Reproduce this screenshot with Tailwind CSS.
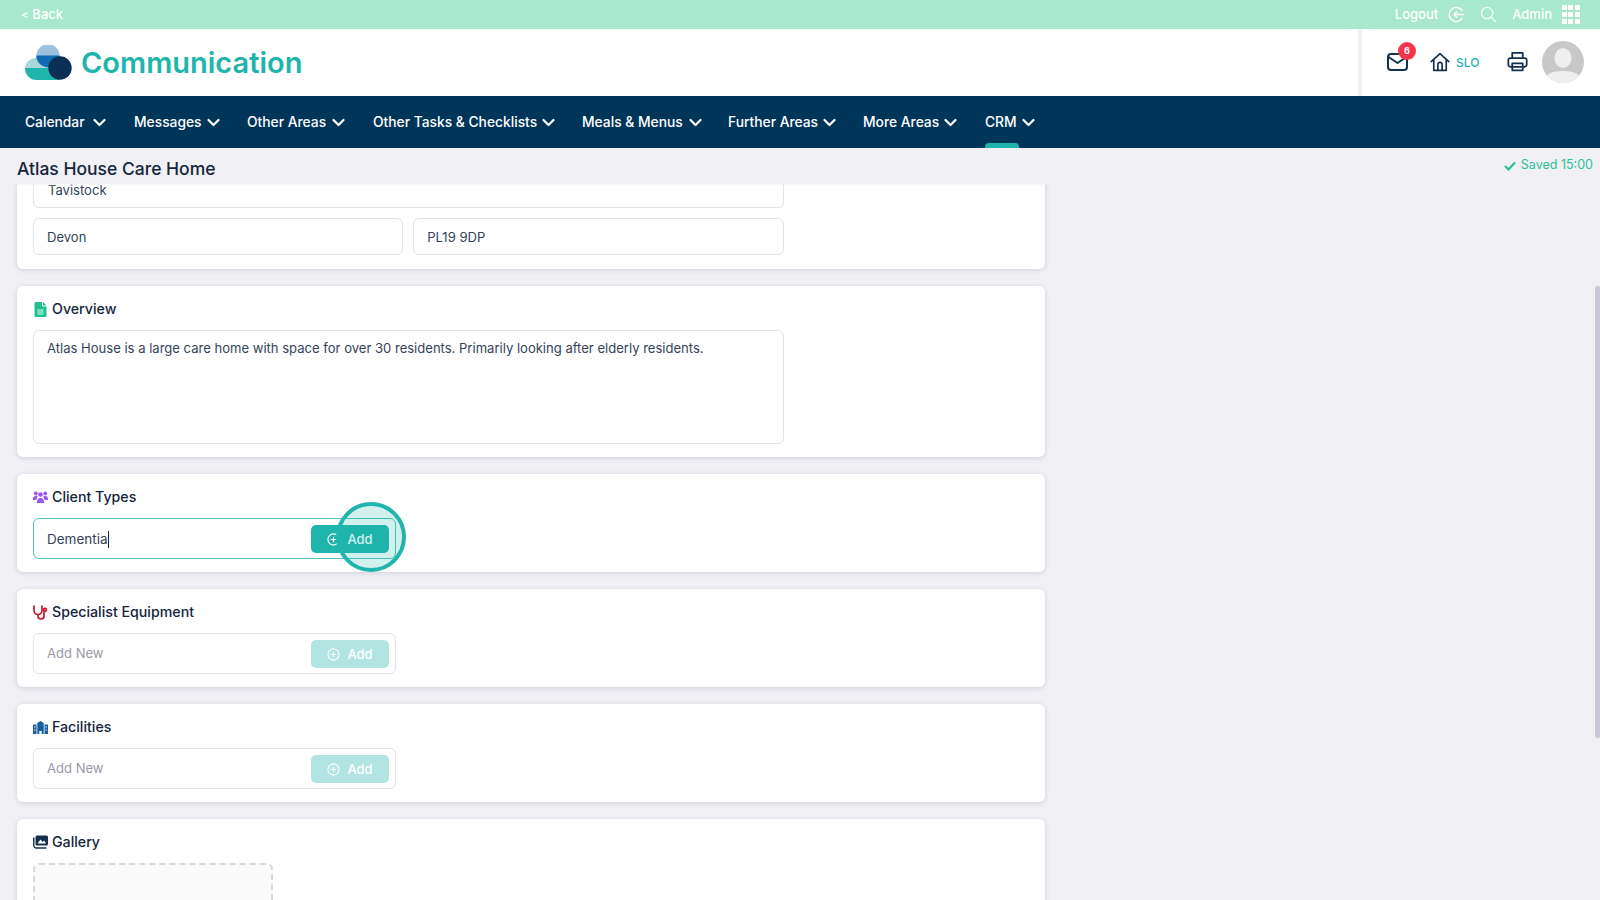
<!DOCTYPE html>
<html lang="en">

<head>
    <meta charset="UTF-8">
    <meta name="viewport" content="width=device-width, initial-scale=1.0">
    <title>Communication</title>
    <script src="https://cdn.jsdelivr.net/npm/@tailwindcss/browser@4"></script>
</head>

<body class="bg-[#f0f0f5] h-[900px] overflow-hidden font-['Inter',sans-serif] text-[#14263d] relative">
    <!-- Top bar -->
    <div class="h-[29px] bg-[#a7e8cf] flex items-center justify-between text-white text-[13px] font-medium pl-[21px] pr-[21px]">
        <a class="flex items-center gap-[4px]"><span class="text-[11px]">&lt;</span>Back</a>
        <div class="flex items-center">
            <span class="mr-[10px]">Logout</span>
            <svg class="w-[17px] h-[17px] mr-[15px]" viewBox="0 0 24 24" fill="none" stroke="currentColor" stroke-width="2" stroke-linecap="round" stroke-linejoin="round"><path d="M20 6.5A10 10 0 1 0 20 17.5"/><path d="M22 12H9"/><path d="M12.5 8 8.5 12l4 4"/></svg>
            <svg class="w-[17px] h-[17px] mr-[15px]" viewBox="0 0 24 24" fill="none" stroke="currentColor" stroke-width="1.7" stroke-linecap="round"><circle cx="10" cy="10" r="8"/><path d="m16 16 6.5 6.5"/></svg>
            <span class="mr-[10px]">Admin</span>
            <div class="grid grid-cols-3 gap-[2px] w-[17px]">
                <i class="w-[5px] h-[5px] bg-white"></i><i class="w-[5px] h-[5px] bg-white"></i><i class="w-[5px] h-[5px] bg-white"></i>
                <i class="w-[5px] h-[5px] bg-white"></i><i class="w-[5px] h-[5px] bg-white"></i><i class="w-[5px] h-[5px] bg-white"></i>
                <i class="w-[5px] h-[5px] bg-white"></i><i class="w-[5px] h-[5px] bg-white"></i><i class="w-[5px] h-[5px] bg-white"></i>
            </div>
        </div>
    </div>

    <!-- Logo row -->
    <header class="h-[67px] bg-white flex items-center justify-between">
        <div class="flex items-center pl-[25px]">
            <svg class="w-[47px] h-[36px] mr-[9px]" viewBox="0 0 47 36">
                <path d="M0 23.500A10.500 10.500 0 0 1 10.500 13H30V24H0Z" fill="#a8d8d8"/>
                <path d="M0 23H34V35H11.500A11.500 11.500 0 0 1 0 23Z" fill="#1fb5ac"/>
                <circle cx="23" cy="11" r="11.700" fill="#9fc0dd"/>
                <path d="M11.300 10.500A11.700 11.700 0 1 0 34.700 10.500Z" fill="#0f6cb0"/>
                <circle cx="35" cy="23" r="11.700" fill="#0b2f55"/>
            </svg>
            <span class="text-[29px] font-semibold text-[#1fb5ac]">Communication</span>
        </div>
        <div class="h-full w-[242px] border-l-[4px] border-[#f0f0f5] relative">
            <svg class="absolute left-[25px] top-[24px] w-[21px] h-[18px]" viewBox="0 0 21 18" fill="none" stroke="#14304f" stroke-width="2" stroke-linejoin="round"><rect x="1" y="1" width="19" height="16" rx="3"/><path d="m1.500 4 9 6 9-6"/></svg>
            <span class="absolute left-[36px] top-[13px] w-[18px] h-[18px] rounded-full bg-[#f5334a] text-white text-[9px] font-bold flex items-center justify-center">6</span>
            <svg class="absolute left-[68px] top-[23px] w-[20px] h-[20px]" viewBox="0 0 24 24" fill="none" stroke="#14304f" stroke-width="2" stroke-linecap="round" stroke-linejoin="round"><path d="M1.500 11.500 12 2l10.500 9.500"/><path d="M4.500 9v13h15V9"/><path d="M9.500 22v-7a2.500 2.500 0 0 1 5 0v7"/></svg>
            <span class="absolute left-[94px] top-[25px] text-[12px] font-medium text-[#1fb5ac]">SLO</span>
            <svg class="absolute left-[145px] top-[22px] w-[21px] h-[21px]" viewBox="0 0 24 24" fill="none" stroke="#14304f" stroke-width="2" stroke-linejoin="round"><path d="M6 8V2h12v6"/><rect x="1.500" y="8" width="21" height="10" rx="2.500"/><rect x="6" y="14" width="12" height="8"/></svg>
            <svg class="absolute left-[180px] top-[12px] w-[42px] h-[42px]" viewBox="0 0 42 42"><defs><clipPath id="avatar"><circle cx="21" cy="21" r="21"/></clipPath></defs><circle cx="21" cy="21" r="21" fill="#c8c8c8"/><g clip-path="url(#avatar)"><ellipse cx="21" cy="17" rx="8.500" ry="10" fill="#efefef"/><path d="M2 42c0-9 8-12 19-12s19 3 19 12Z" fill="#efefef"/></g></svg>
        </div>
    </header>

    <!-- Main nav -->
    <nav class="h-[52px] bg-[#00355a] flex items-center pl-[25px] pt-[1px] text-white text-[13.800px] font-medium relative">
        <a class="w-[109px] flex items-center gap-[8px]">Calendar<svg class="w-[13px] h-[9px]" viewBox="0 0 13 9" fill="none" stroke="currentColor" stroke-width="2.200" stroke-linecap="round" stroke-linejoin="round"><path d="m1.500 2 5 5 5-5"/></svg></a>
        <a class="w-[113px] flex items-center gap-[6px]">Messages<svg class="w-[13px] h-[9px]" viewBox="0 0 13 9" fill="none" stroke="currentColor" stroke-width="2.200" stroke-linecap="round" stroke-linejoin="round"><path d="m1.500 2 5 5 5-5"/></svg></a>
        <a class="w-[126px] flex items-center gap-[6px]">Other Areas<svg class="w-[13px] h-[9px]" viewBox="0 0 13 9" fill="none" stroke="currentColor" stroke-width="2.200" stroke-linecap="round" stroke-linejoin="round"><path d="m1.500 2 5 5 5-5"/></svg></a>
        <a class="w-[209px] flex items-center gap-[5px]">Other Tasks &amp; Checklists<svg class="w-[13px] h-[9px]" viewBox="0 0 13 9" fill="none" stroke="currentColor" stroke-width="2.200" stroke-linecap="round" stroke-linejoin="round"><path d="m1.500 2 5 5 5-5"/></svg></a>
        <a class="w-[146px] flex items-center gap-[6px]">Meals &amp; Menus<svg class="w-[13px] h-[9px]" viewBox="0 0 13 9" fill="none" stroke="currentColor" stroke-width="2.200" stroke-linecap="round" stroke-linejoin="round"><path d="m1.500 2 5 5 5-5"/></svg></a>
        <a class="w-[135px] flex items-center gap-[5px]">Further Areas<svg class="w-[13px] h-[9px]" viewBox="0 0 13 9" fill="none" stroke="currentColor" stroke-width="2.200" stroke-linecap="round" stroke-linejoin="round"><path d="m1.500 2 5 5 5-5"/></svg></a>
        <a class="w-[122px] flex items-center gap-[5px]">More Areas<svg class="w-[13px] h-[9px]" viewBox="0 0 13 9" fill="none" stroke="currentColor" stroke-width="2.200" stroke-linecap="round" stroke-linejoin="round"><path d="m1.500 2 5 5 5-5"/></svg></a>
        <a class="relative h-full flex items-center gap-[5px]">CRM<svg class="w-[13px] h-[9px]" viewBox="0 0 13 9" fill="none" stroke="currentColor" stroke-width="2.200" stroke-linecap="round" stroke-linejoin="round"><path d="m1.500 2 5 5 5-5"/></svg><span class="absolute left-0 bottom-0 w-[34px] h-[5px] rounded-t-[4px] bg-[#1fb5ac]"></span></a>
    </nav>

    <!-- Page title -->
    <div class="h-[35px] pl-[17px] pr-[7px] flex justify-between relative">
        <h1 class="text-[17.500px] font-medium leading-[42px]">Atlas House Care Home</h1>
        <div class="flex items-center gap-[5px] h-[35px] text-[12.500px] text-[#2dbf96]">
            <svg class="w-[12px] h-[10px]" viewBox="0 0 12 10" fill="none" stroke="currentColor" stroke-width="2.200"><path d="m1 5 3.500 3.500L11 1.500"/></svg>Saved 15:00
        </div>
    </div>

    <!-- Scrolling content -->
    <main class="h-[717px] overflow-hidden pl-[17px] text-[13.060px] text-[#33445a] relative">
        <div class="w-[1028px] flex flex-col gap-[17px]">
            <section class="-mt-[18px] h-[104px] bg-white rounded-[6px] shadow-[0_1px_5px_rgba(40,40,80,0.16)] px-[16px] flex flex-col gap-[10px]">
                <div class="w-[750.500px] h-[43px] shrink-0 border border-[#e2e2ea] rounded-[6px] px-[14px] pt-[15px]">Tavistock</div>
                <div class="w-[750.500px] flex gap-[10px]">
                    <div class="flex-1 h-[37px] border border-[#e2e2ea] rounded-[6px] px-[13px] pt-[2px] flex items-center">Devon</div>
                    <div class="flex-1 h-[37px] border border-[#e2e2ea] rounded-[6px] px-[13px] pt-[2px] flex items-center">PL19 9DP</div>
                </div>
            </section>

            <section class="h-[171px] bg-white rounded-[6px] shadow-[0_1px_5px_rgba(40,40,80,0.16)] pt-[14px] px-[16px]">
                <h2 class="flex items-center gap-[4px] h-[18px] text-[14.200px] font-medium text-[#14263d]">
                    <svg class="w-[15px] h-[15px]" viewBox="0 0 12 15"><path d="M1.500 0H7.500V4.500H12V13.500A1.500 1.500 0 0 1 10.500 15H1.500A1.500 1.500 0 0 1 0 13.500V1.500A1.500 1.500 0 0 1 1.500 0Z" fill="#1fc08e"/><path d="M8.500 0 12 3.500H8.500Z" fill="#1fc08e"/><path d="M3 8h6M3 10h6M3 12h6" stroke="#fff" stroke-width="0.900"/></svg>
                    Overview
                </h2>
                <div class="w-[750.500px] h-[114px] mt-[12px] border border-[#e2e2ea] rounded-[6px] px-[13px] py-[7px] leading-[20px]">Atlas House is a large care home with space for over 30 residents. Primarily looking after elderly residents.</div>
            </section>

            <section class="h-[98px] bg-white rounded-[6px] shadow-[0_1px_5px_rgba(40,40,80,0.16)] pt-[14px] px-[16px]">
                <h2 class="flex items-center gap-[4px] h-[18px] text-[14.200px] font-medium text-[#14263d]">
                    <svg class="w-[15px] h-[15px]" viewBox="0 0 15 15" fill="#9a55ee"><circle cx="2.800" cy="3.500" r="1.900"/><circle cx="7.500" cy="4.500" r="2.300"/><circle cx="12.200" cy="3.500" r="1.900"/><path d="M0 9c0-2 1-3 2.800-3S4.500 6.500 4.600 7 3.500 8.500 3.400 10H0Z"/><path d="M15 9c0-2-1-3-2.800-3s-1.700.5-1.800 1 1.100 1.500 1.200 3H15Z"/><path d="M3.800 13c0-3 1.300-5 3.700-5s3.700 2 3.700 5Z"/></svg>
                    Client Types
                </h2>
                <div class="w-[363px] h-[41px] mt-[12px] border border-[#4cc3bb] rounded-[6px] pl-[13px] pr-[6px] pt-[1px] flex items-center justify-between">
                    <span class="text-[13.500px] flex items-center">Dementia<i class="w-px h-[17px] bg-[#14263d]"></i></span>
                    <button class="w-[78px] h-[28px] rounded-[5px] bg-[#1fb5ac] text-white text-[13px] font-medium flex items-center justify-center gap-[7px]">
                        <svg class="w-[13px] h-[13px]" viewBox="0 0 14 14" fill="none" stroke="currentColor" stroke-width="1.200"><circle cx="7" cy="7" r="6"/><path d="M7 4v6M4 7h6"/></svg><span class="mt-[2px]">Add</span>
                    </button>
                </div>
            </section>

            <section class="h-[98px] bg-white rounded-[6px] shadow-[0_1px_5px_rgba(40,40,80,0.16)] pt-[14px] px-[16px]">
                <h2 class="flex items-center gap-[4px] h-[18px] text-[14.200px] font-medium text-[#14263d]">
                    <svg class="w-[15px] h-[15px]" viewBox="0 0 15 15" fill="none" stroke="#c8172e" stroke-width="1.700" stroke-linecap="round"><path d="M1 1v4.500a4 4 0 0 0 8 0V1"/><path d="M5 9.500v1.500a3 3 0 0 0 6 0V7"/><circle cx="12" cy="4.800" r="1.500"/></svg>
                    Specialist Equipment
                </h2>
                <div class="w-[363px] h-[41px] mt-[12px] border border-[#e2e2ea] rounded-[6px] pl-[13px] pr-[6px] pt-[1px] flex items-center justify-between">
                    <span class="text-[#9a9aa8]">Add New</span>
                    <button class="w-[78px] h-[28px] rounded-[5px] bg-[#b2e5e2] text-white text-[13px] font-medium flex items-center justify-center gap-[7px]">
                        <svg class="w-[13px] h-[13px]" viewBox="0 0 14 14" fill="none" stroke="currentColor" stroke-width="1.200"><circle cx="7" cy="7" r="6"/><path d="M7 4v6M4 7h6"/></svg><span class="mt-[2px]">Add</span>
                    </button>
                </div>
            </section>

            <section class="h-[98px] bg-white rounded-[6px] shadow-[0_1px_5px_rgba(40,40,80,0.16)] pt-[14px] px-[16px]">
                <h2 class="flex items-center gap-[4px] h-[18px] text-[14.200px] font-medium text-[#14263d]">
                    <svg class="w-[15px] h-[15px]" viewBox="0 0 15 15" fill="#155f9e"><path d="M0 4.500h3.500V14H0Z"/><path d="M11.500 4.500H15V14h-3.500Z"/><path d="M4.300 3 7.500 1l3.200 2v11h-2V11h-2.400v3h-2Z"/><path d="M1 7h1.500M1 10h1.500M12.500 7H14M12.500 10H14" stroke="#fff" stroke-width="0.900"/></svg>
                    Facilities
                </h2>
                <div class="w-[363px] h-[41px] mt-[12px] border border-[#e2e2ea] rounded-[6px] pl-[13px] pr-[6px] pt-[1px] flex items-center justify-between">
                    <span class="text-[#9a9aa8]">Add New</span>
                    <button class="w-[78px] h-[28px] rounded-[5px] bg-[#b2e5e2] text-white text-[13px] font-medium flex items-center justify-center gap-[7px]">
                        <svg class="w-[13px] h-[13px]" viewBox="0 0 14 14" fill="none" stroke="currentColor" stroke-width="1.200"><circle cx="7" cy="7" r="6"/><path d="M7 4v6M4 7h6"/></svg><span class="mt-[2px]">Add</span>
                    </button>
                </div>
            </section>

            <section class="h-[120px] bg-white rounded-[6px] shadow-[0_1px_5px_rgba(40,40,80,0.16)] pt-[14px] px-[16px]">
                <h2 class="flex items-center gap-[4px] h-[18px] text-[14.200px] font-medium text-[#14263d]">
                    <svg class="w-[15px] h-[14px]" viewBox="0 0 15 14" fill="none"><rect x="2.500" y="0.500" width="12.500" height="10" rx="1.500" fill="#14304f"/><path d="M4.500 8.500 7.500 4.500l2 2.500 1.500-1.500 2 3Z" fill="#fff"/><path d="M.8 3v7.500a2.500 2.500 0 0 0 2.500 2.500H13" stroke="#14304f" stroke-width="1.400" stroke-linecap="round"/></svg>
                    Gallery
                </h2>
                <div class="w-[240px] h-[90px] mt-[12px] border-2 border-dashed border-[#d8d8de] rounded-[6px] bg-[#fafafa]"></div>
            </section>
        </div>
        <!-- soft fade where content scrolls under the title -->
        <div class="absolute left-0 right-0 top-0 h-[3px] bg-linear-to-b from-[#f0f0f5] to-transparent"></div>
    </main>

    <!-- Click highlight on the Add button -->
    <div class="absolute left-[336px] top-[502px] w-[70px] h-[70px] rounded-full border-[4px] border-[#1fb5ac] bg-[#1fb5ac]/20"></div>

    <!-- Scrollbar -->
    <div class="absolute right-0 top-[286px] w-[5px] h-[452px] rounded-[2px] bg-[#c9c9d9]"></div>
</body>

</html>
